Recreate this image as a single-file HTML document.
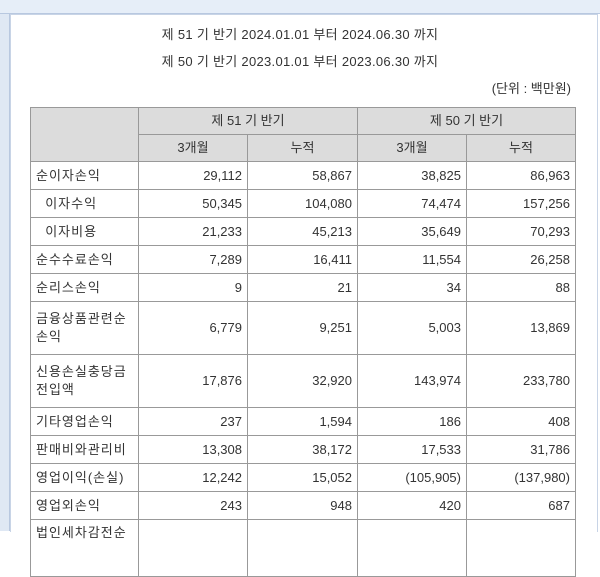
<!DOCTYPE html>
<html><head><meta charset="utf-8"><style>
body{margin:0;width:600px;height:531px;overflow:hidden;background:#fff;font-family:"Liberation Sans","Noto Sans CJK KR","NanumGothic",sans-serif;font-size:13px;color:#333;position:relative}
.top{position:absolute;left:0;top:0;width:600px;height:13px;background:#e6eef8;border-bottom:1px solid #b8c8e0}
.left{position:absolute;left:0;top:14px;width:9px;height:517px;background:#dfe8f4;border-right:1px solid #b8c8e0}
.frame{position:absolute;left:10px;top:14px;width:586px;height:517px;border-left:1px solid #c8d4e6;border-top:1px solid #c8d4e6;border-right:1px solid #c8d4e6}
.t{position:absolute;left:0;width:600px;text-align:center;letter-spacing:0.3px}
table{position:absolute;left:30px;top:107px;border-collapse:collapse;table-layout:fixed}
td{border:1px solid #999;padding:0 5px;height:27px;line-height:18px}
td.h{background:#dcdcdc;text-align:center;height:26px}
td.n{text-align:right}
td.l{text-align:left;letter-spacing:1px}
tr.d td{height:52px}
</style></head><body>
<div class="top"></div><div class="left"></div><div class="frame"></div>
<div class="t" style="top:24px">제 51 기 반기 2024.01.01 부터 2024.06.30 까지</div>
<div class="t" style="top:51px">제 50 기 반기 2023.01.01 부터 2023.06.30 까지</div>
<div style="position:absolute;right:29px;top:78px">(단위 : 백만원)</div>
<table>
<colgroup><col style="width:108px"><col style="width:109px"><col style="width:110px"><col style="width:109px"><col style="width:109px"></colgroup>
<tr><td class="h" rowspan="2"></td><td class="h" colspan="2">제 51 기 반기</td><td class="h" colspan="2">제 50 기 반기</td></tr>
<tr><td class="h">3개월</td><td class="h">누적</td><td class="h">3개월</td><td class="h">누적</td></tr>
<tr><td class="l">순이자손익</td><td class="n">29,112</td><td class="n">58,867</td><td class="n">38,825</td><td class="n">86,963</td></tr>
<tr><td class="l">&nbsp;&nbsp;이자수익</td><td class="n">50,345</td><td class="n">104,080</td><td class="n">74,474</td><td class="n">157,256</td></tr>
<tr><td class="l">&nbsp;&nbsp;이자비용</td><td class="n">21,233</td><td class="n">45,213</td><td class="n">35,649</td><td class="n">70,293</td></tr>
<tr><td class="l">순수수료손익</td><td class="n">7,289</td><td class="n">16,411</td><td class="n">11,554</td><td class="n">26,258</td></tr>
<tr><td class="l">순리스손익</td><td class="n">9</td><td class="n">21</td><td class="n">34</td><td class="n">88</td></tr>
<tr class="d"><td class="l">금융상품관련순손익</td><td class="n">6,779</td><td class="n">9,251</td><td class="n">5,003</td><td class="n">13,869</td></tr>
<tr class="d"><td class="l">신용손실충당금전입액</td><td class="n">17,876</td><td class="n">32,920</td><td class="n">143,974</td><td class="n">233,780</td></tr>
<tr><td class="l">기타영업손익</td><td class="n">237</td><td class="n">1,594</td><td class="n">186</td><td class="n">408</td></tr>
<tr><td class="l">판매비와관리비</td><td class="n">13,308</td><td class="n">38,172</td><td class="n">17,533</td><td class="n">31,786</td></tr>
<tr><td class="l">영업이익(손실)</td><td class="n">12,242</td><td class="n">15,052</td><td class="n">(105,905)</td><td class="n">(137,980)</td></tr>
<tr><td class="l">영업외손익</td><td class="n">243</td><td class="n">948</td><td class="n">420</td><td class="n">687</td></tr>
<tr class="d"><td class="l" style="vertical-align:top;padding-top:4px">법인세차감전순</td><td class="n"></td><td class="n"></td><td class="n"></td><td class="n"></td></tr>
</table>
</body></html>
